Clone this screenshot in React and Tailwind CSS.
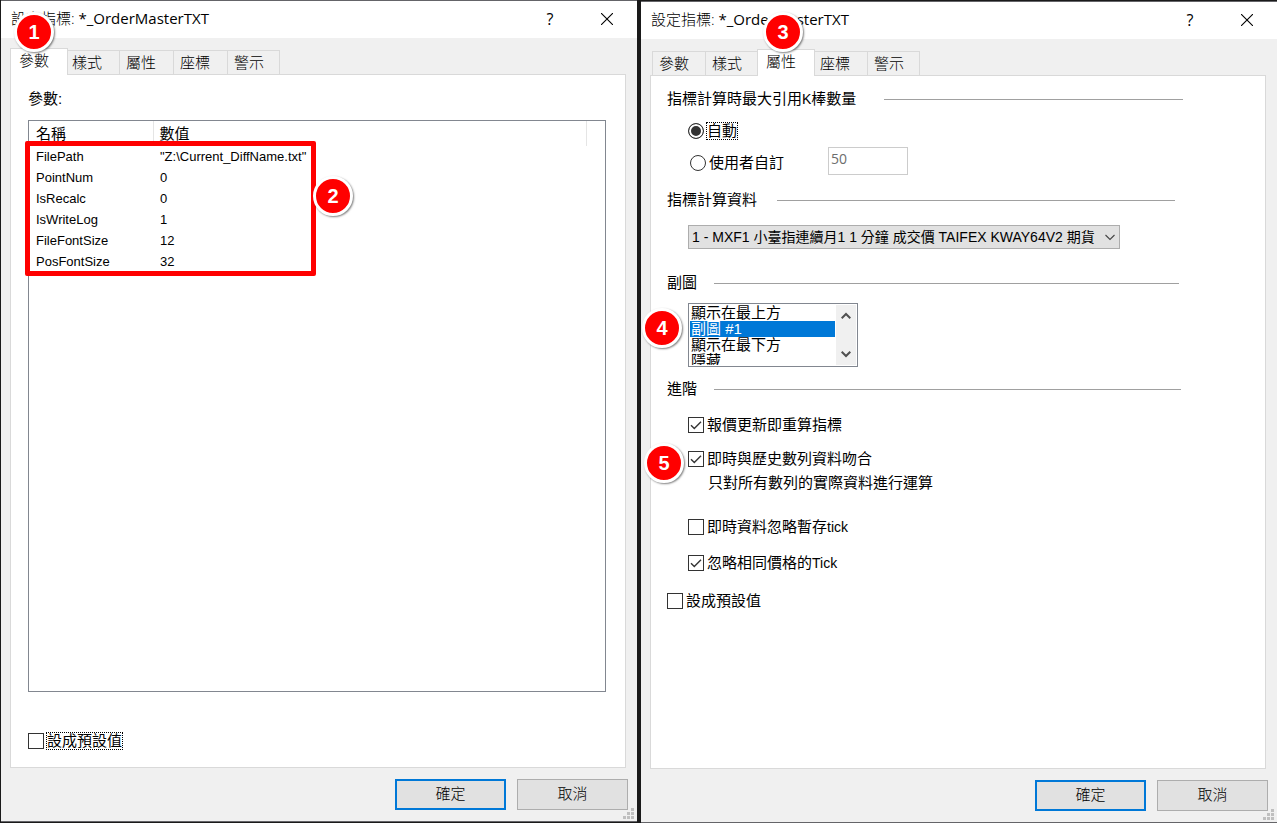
import React, { useState } from "react";

const TABS = ["參數", "樣式", "屬性", "座標", "警示"];

const PARAMS = [
  { name: "FilePath", value: '"Z:\\Current_DiffName.txt"' },
  { name: "PointNum", value: "0" },
  { name: "IsRecalc", value: "0" },
  { name: "IsWriteLog", value: "1" },
  { name: "FileFontSize", value: "12" },
  { name: "PosFontSize", value: "32" },
];

// Numbered red marker, placed over the dialog by its className
const Badge = ({ number, className }) => (
  <span
    className={`absolute z-20 flex h-10 w-10 items-center justify-center rounded-full border-3 border-white bg-[#ff0000] text-xl font-bold text-white shadow-[1px_1px_2px_rgba(0,0,0,0.5)] ${className}`}
  >
    {number}
  </span>
);

const Latin = ({ children }) => <span className="text-sm leading-4">{children}</span>;

const CheckBox = ({ label, checked = false, focused = false }) => {
  const [on, setOn] = useState(checked);

  return (
    <label className="flex h-5 w-fit items-center gap-[3px]">
      <span className="grid">
        <input
          type="checkbox"
          className="col-start-1 row-start-1 h-4 w-4 appearance-none border border-[#333333] bg-white"
          checked={on}
          onChange={(e) => setOn(e.target.checked)}
        />
        {on && (
          <svg className="pointer-events-none col-start-1 row-start-1 h-4 w-4" viewBox="0 0 16 16" fill="none">
            <path d="M3 8.2 L6.3 11.5 L13 4.8" stroke="#333333" strokeWidth="1.4" />
          </svg>
        )}
      </span>
      <span className={focused ? "leading-4 outline-1 outline-dotted outline-black" : "leading-5"}>{label}</span>
    </label>
  );
};

const Radio = ({ label, value, selected, onSelect, focused = false }) => (
  <label className="flex h-6 items-center gap-[3px]">
    <input
      type="radio"
      name="maxBars"
      className="h-4 w-4 appearance-none rounded-full border border-[#333333] bg-white checked:bg-[#333333] checked:shadow-[inset_0_0_0_2px_white]"
      checked={selected === value}
      onChange={() => onSelect(value)}
    />
    <span className={focused ? "leading-4 outline-1 outline-dotted outline-black" : "leading-5"}>{label}</span>
  </label>
);

const SectionTitle = ({ children, className = "", ruleClass }) => (
  <div className={`flex h-5 items-center ${className}`}>
    <h2 className="leading-5">{children}</h2>
    <span className={`h-px flex-1 bg-[#a0a0a0] ${ruleClass}`} />
  </div>
);

const ResizeGrip = () => (
  <svg className="absolute right-[3px] bottom-0.5 h-[11px] w-[11px]" viewBox="0 0 11 11" fill="#bfbfbf">
    <rect x="8" y="0" width="3" height="3" />
    <rect x="4" y="4" width="3" height="3" />
    <rect x="8" y="4" width="3" height="3" />
    <rect x="0" y="8" width="3" height="3" />
    <rect x="4" y="8" width="3" height="3" />
    <rect x="8" y="8" width="3" height="3" />
  </svg>
);

const Dialog = ({ activeTab, className, badges, children }) => (
  <section className={`relative flex flex-1 flex-col border-y border-[#646468] bg-[#f0f0f0] ${className}`}>
    <header className="flex h-[37px] items-center bg-white pb-0.5 pl-2.5">
      <h1 className="flex-1 font-['Open_Sans','Noto_Sans_CJK_TC',sans-serif] text-[15px] font-light">
        設定指標: <span className="font-normal">*_OrderMasterTXT</span>
      </h1>
      <button type="button" aria-label="說明" className="w-[54px] text-center font-['Open_Sans',sans-serif] text-base">
        ?
      </button>
      <button type="button" aria-label="關閉" className="flex w-[60px] justify-center">
        <svg className="h-3 w-3" viewBox="0 0 12 12" stroke="black" strokeWidth="1.1">
          <path d="M0 0 L12 12 M12 0 L0 12" />
        </svg>
      </button>
    </header>

    <div className="flex flex-1 flex-col px-[9px] pt-2.5">
      <nav className="relative z-10 -mb-px flex h-[27px] items-end pl-0.5 text-[15px] font-light" role="tablist">
        {TABS.map((tab) =>
          tab === activeTab ? (
            <button
              key={tab}
              type="button"
              role="tab"
              aria-selected="true"
              className="z-10 -mx-0.5 h-[27px] w-[58px] border border-b-0 border-[#d9d9d9] bg-white pb-0.5 pl-2 text-left leading-5 first:-mr-[3px]"
            >
              {tab}
            </button>
          ) : (
            <button
              key={tab}
              type="button"
              role="tab"
              aria-selected="false"
              className="-mr-px h-[25px] w-[55px] border border-[#d9d9d9] bg-[#f0f0f0] pl-1.5 text-left leading-5 first:w-[54px] last:w-[53px]"
            >
              {tab}
            </button>
          )
        )}
      </nav>
      <div className="mr-[2px] flex flex-1 flex-col border border-[#d9d9d9] bg-white">{children}</div>
    </div>

    <footer className="flex h-[53px] justify-end gap-[11px] pt-[11px] pr-[9px] font-light">
      <button type="button" className="h-[31px] w-[111px] border-2 border-[#0078d7] bg-[#e1e1e1]">
        確定
      </button>
      <button type="button" className="h-[31px] w-[111px] border border-[#adadad] bg-[#e1e1e1]">
        取消
      </button>
    </footer>
    <ResizeGrip />
    {badges}
  </section>
);

const ParamsPanel = () => (
  <div className="flex flex-1 flex-col pt-3.5 pr-[19px] pb-4 pl-[17px]">
    <p className="h-5 leading-5">參數:</p>
    <div className="relative mt-[11px] flex-1 border border-[#828790]">
      <table className="w-full table-fixed text-left">
        <thead>
          <tr className="h-[25px]">
            <th className="w-[124px] border-r border-[#e5e5e5] p-0 pl-[7px] leading-5 font-normal">名稱</th>
            <th className="border-r border-[#e5e5e5] p-0 pl-1.5 leading-5 font-normal">數值</th>
            <th className="w-[19px] p-0" />
          </tr>
        </thead>
        <tbody className="text-[13px]">
          {PARAMS.map((param) => (
            <tr key={param.name} className="h-[21px]">
              <td className="p-0 pl-[7px] leading-5">{param.name}</td>
              <td className="p-0 pl-[7px] leading-5">{param.value}</td>
              <td className="p-0" />
            </tr>
          ))}
        </tbody>
      </table>
      {/* red frame around the parameter rows */}
      <div className="absolute top-5 -left-1 h-[135px] w-[291px] rounded-xs border-5 border-[#ff0000]" />
      <Badge number={2} className="top-[55px] left-[284px]" />
    </div>
    <div className="mt-[39px]">
      <CheckBox label="設成預設值" focused />
    </div>
  </div>
);

const PropertiesPanel = () => {
  const [maxBars, setMaxBars] = useState("auto");
  const [subChart, setSubChart] = useState("sub1");

  return (
    <div className="flex flex-1 flex-col pt-[13px] pl-4">
      <SectionTitle ruleClass="ml-7 mr-[82px]">
        指標計算時最大引用<Latin>K</Latin>棒數量
      </SectionTitle>
      <div className="mt-2.5 pl-[21px]">
        <Radio label="自動" value="auto" selected={maxBars} onSelect={setMaxBars} focused />
      </div>
      <div className="mt-1 flex items-end pl-[23px]">
        <Radio label="使用者自訂" value="custom" selected={maxBars} onSelect={setMaxBars} />
        <input
          type="text"
          aria-label="使用者自訂"
          className="ml-11 h-7 w-20 border border-[#cccccc] bg-white px-0.5 pb-1.5 font-['Open_Sans',sans-serif] text-sm text-[#6d6d6d]"
          defaultValue="50"
        />
      </div>

      <SectionTitle className="mt-[15px]" ruleClass="ml-5 mr-[90px]">
        指標計算資料
      </SectionTitle>
      <div className="mt-[15px] mr-[145px] ml-[21px] grid">
        <select
          aria-label="指標計算資料"
          className="col-start-1 row-start-1 h-6 w-full appearance-none border border-[#adadad] bg-[#e1e1e1] pl-[3px] text-sm leading-5"
        >
          <option>1 - MXF1 小臺指連續月1 1 分鐘 成交價 TAIFEX KWAY64V2 期貨</option>
        </select>
        <svg
          className="pointer-events-none col-start-1 row-start-1 mr-[5px] h-2.5 w-2.5 self-center justify-self-end"
          viewBox="0 0 10 10"
          fill="none"
        >
          <path d="M0.5 3 L5 7.5 L9.5 3" stroke="#444444" strokeWidth="1.1" />
        </svg>
      </div>

      <SectionTitle className="mt-6" ruleClass="ml-[17px] mr-[86px]">
        副圖
      </SectionTitle>
      <div className="mt-2.5 ml-[21px] flex h-16 w-[170px] border border-[#828790] p-px">
        <select
          size={4}
          aria-label="副圖"
          className="h-full flex-1 appearance-none overflow-hidden bg-white text-[15px] outline-none"
          value={subChart}
          onChange={(e) => setSubChart(e.target.value)}
        >
          <option className="flex h-4 min-h-0 items-center p-0 pb-[3px] pl-px leading-4" value="top">顯示在最上方</option>
          <option
            className="flex h-4 min-h-0 items-center p-0 pb-[3px] pl-px leading-4 checked:bg-[#0078d7] checked:bg-[linear-gradient(#0078d7,#0078d7)] checked:text-white! checked:[-webkit-text-fill-color:white]"
            value="sub1"
          >
            副圖 #1
          </option>
          <option className="flex h-4 min-h-0 items-center p-0 pb-[3px] pl-px leading-4" value="bottom">顯示在最下方</option>
          <option className="flex h-4 min-h-0 items-center p-0 pb-[3px] pl-px leading-4" value="hidden">隱藏</option>
        </select>
        <div className="ml-px flex w-5 flex-col justify-between bg-[#f0f0f0] py-1.5">
          <button type="button" aria-label="向上捲動" className="flex justify-center">
            <svg className="h-2.5 w-2.5" viewBox="0 0 10 10" fill="none">
              <path d="M0.7 7.3 L5 3 L9.3 7.3" stroke="#505050" strokeWidth="2" />
            </svg>
          </button>
          <button type="button" aria-label="向下捲動" className="flex justify-center">
            <svg className="h-2.5 w-2.5" viewBox="0 0 10 10" fill="none">
              <path d="M0.7 2.7 L5 7 L9.3 2.7" stroke="#505050" strokeWidth="2" />
            </svg>
          </button>
        </div>
      </div>

      <SectionTitle className="mt-3" ruleClass="ml-[17px] mr-[84px]">
        進階
      </SectionTitle>
      <div className="mt-4 pl-[21px]">
        <CheckBox label="報價更新即重算指標" checked />
        <div className="mt-3.5">
          <CheckBox label="即時與歷史數列資料吻合" checked />
        </div>
        <p className="mt-1 pl-5 leading-5">只對所有數列的實際資料進行運算</p>
        <div className="mt-6">
          <CheckBox label={<>即時資料忽略暫存<Latin>tick</Latin></>} />
        </div>
        <div className="mt-4">
          <CheckBox label={<>忽略相同價格的<Latin>Tick</Latin></>} checked />
        </div>
      </div>
      <div className="mt-[18px]">
        <CheckBox label="設成預設值" />
      </div>
    </div>
  );
};

const App = () => {
  return (
    <main className="flex min-h-screen gap-1 bg-[#1a1a1a] pl-px font-['Liberation_Sans','Noto_Sans_CJK_TC',sans-serif] text-[15px] text-black">
      <Dialog
        activeTab="參數"
        className="mb-px"
        badges={<Badge number={1} className="top-[11px] left-[13px]" />}
      >
        <ParamsPanel />
      </Dialog>
      <Dialog
        activeTab="屬性"
        className="mt-px"
        badges={
          <>
            <Badge number={3} className="top-2.5 left-[122px]" />
            <Badge number={4} className="top-[306px] left-px" />
            <Badge number={5} className="top-[441px] left-[3px]" />
          </>
        }
      >
        <PropertiesPanel />
      </Dialog>
    </main>
  );
};

export default App;
